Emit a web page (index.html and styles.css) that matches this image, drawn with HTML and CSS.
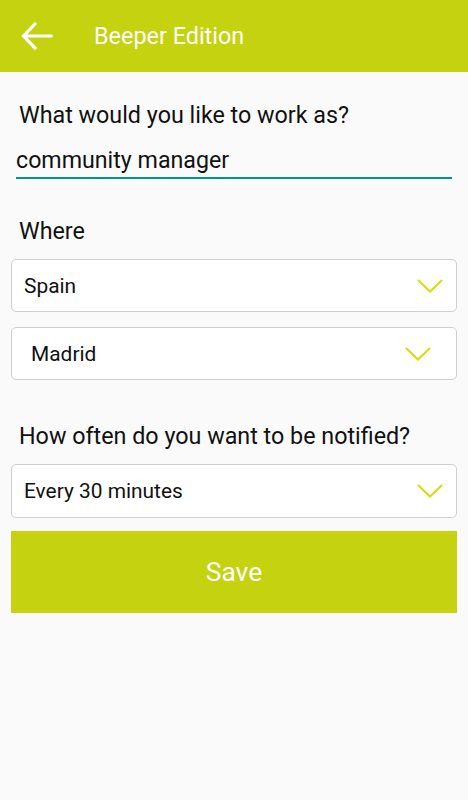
FILE: index.html
```html
<!DOCTYPE html>
<html lang="en">
<head>
  <meta charset="UTF-8">
  <title>Beeper Edition</title>
  <link rel="stylesheet" href="styles.css">
</head>
<body>
  <header class="topbar">
    <button class="back" type="button" aria-label="Back">
      <svg width="32" height="28" viewBox="0 0 32 28">
        <path d="M30 14H3M14 2L2.5 14L14 26" fill="none" stroke="#fff" stroke-width="3.2" stroke-linecap="square"/>
      </svg>
    </button>
    <h1 class="title">Beeper Edition</h1>
  </header>

  <form class="prefs">
    <label class="label label-first">What would you like to work as?</label>
    <input class="job" type="text" value="community manager">

    <label class="label label-where">Where</label>
    <div class="select">
      <span class="select-text">Spain</span>
      <svg class="chevron" width="26" height="14" viewBox="0 0 26 14"><path d="M1 1L13 12.5L25 1" fill="none" stroke="#d2df0a" stroke-width="2"/></svg>
    </div>
    <div class="select select-city">
      <span class="select-text">Madrid</span>
      <svg class="chevron" width="26" height="14" viewBox="0 0 26 14"><path d="M1 1L13 12.5L25 1" fill="none" stroke="#d2df0a" stroke-width="2"/></svg>
    </div>

    <label class="label label-often">How often do you want to be notified?</label>
    <div class="select select-often">
      <span class="select-text">Every 30 minutes</span>
      <svg class="chevron" width="26" height="14" viewBox="0 0 26 14"><path d="M1 1L13 12.5L25 1" fill="none" stroke="#d2df0a" stroke-width="2"/></svg>
    </div>

    <button class="save" type="submit">Save</button>
  </form>
</body>
</html>
```

FILE: styles.css
```css
body {
  margin: 0;
  background: #fafafa;
  font-family: Roboto, "Liberation Sans", sans-serif;
  color: #111;
}
.topbar {
  height: 72px;
  background: #c4d20f;
  display: flex;
  align-items: center;
}
.back {
  background: none;
  border: none;
  padding: 0;
  margin-left: 21px;
  width: 32px;
  height: 28px;
  display: flex;
}
.title {
  margin: 0 0 0 41px;
  font-size: 23.4px;
  font-weight: 400;
  color: #fff;
}
.prefs {
  display: flex;
  flex-direction: column;
  padding: 0 11px;
}
.label {
  font-size: 23.3px;
  line-height: 28px;
  padding-left: 8px;
}
.label-first {
  margin-top: 29px;
}
.label-where {
  margin-top: 38px;
}
.label-often {
  margin-top: 42px;
}
.job {
  margin: 13px 5px 0 5px;
  padding: 0;
  height: 35px;
  border: none;
  border-bottom: 2px solid #009688;
  background: transparent;
  font-family: inherit;
  font-size: 23.2px;
  color: #111;
  outline: none;
}
.select {
  margin-top: 14px;
  height: 51px;
  border: 1px solid #cfcfcf;
  border-radius: 5px;
  background: #fff;
  display: flex;
  align-items: center;
  justify-content: space-between;
  padding: 0 13px 0 12px;
}
.select-city {
  margin-top: 15px;
  padding: 0 25px 0 19px;
}
.select-often {
  height: 52px;
}
.select-text {
  font-size: 20.9px;
}
.chevron {
  display: block;
}
.save {
  margin-top: 13px;
  height: 82px;
  border: none;
  background: #c4d20f;
  color: #fff;
  font-family: inherit;
  font-size: 26.4px;
}
```
